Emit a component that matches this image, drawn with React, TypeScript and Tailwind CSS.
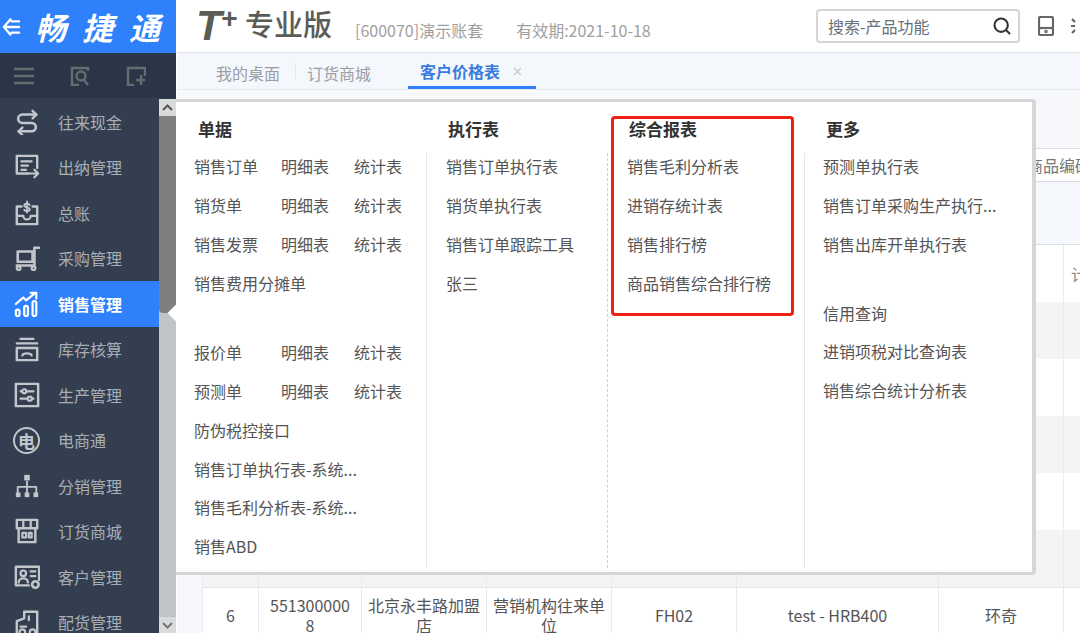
import type { ReactNode } from "react";
import { Search, X } from "lucide-react";

type NavItem = { label: string; icon: ReactNode; active?: boolean };

function Glyph({ children }: { children: ReactNode }) {
  return (
    <svg width="26" height="26" viewBox="0 0 28 28" fill="none" stroke="currentColor" strokeWidth="2.4" strokeLinecap="round" strokeLinejoin="round" className="shrink-0">
      {children}
    </svg>
  );
}

const navItems: NavItem[] = [
  {
    label: "往来现金",
    icon: (
      <Glyph>
        <path d="M24 6H9a4.500 4.500 0 0 0 0 9h10a4.500 4.500 0 0 1 0 9H5" strokeWidth="2.800" />
        <path d="M20 2l4 4-4 4M9 20l-4 4 4 4" strokeWidth="2.600" />
      </Glyph>
    ),
  },
  {
    label: "出纳管理",
    icon: (
      <Glyph>
        <path d="M25 15V2H3v19h12" strokeWidth="2.600" />
        <path d="M8 8h11M8 12.500h7M8 17h5" />
        <path d="M15 21h11M22 17l4 4-4 4" />
      </Glyph>
    ),
  },
  {
    label: "总账",
    icon: (
      <Glyph>
        <path d="M8 7H3v19h22V7h-5" strokeWidth="2.600" />
        <path d="M3 17h7a4 4 0 0 0 8 0h7" />
        <path d="M17 5.500c-1-2-6-2-6 .5s6 1.500 6 4-5 2.500-6 .5M14 1.500v12" strokeWidth="2" />
      </Glyph>
    ),
  },
  {
    label: "采购管理",
    icon: (
      <Glyph>
        <path d="M4 7h16v11H4z" strokeWidth="2.800" />
        <path d="M27 3h-5v19H3" strokeWidth="2.800" />
        <circle cx="5" cy="25" r="2" />
        <circle cx="21" cy="25" r="2" />
      </Glyph>
    ),
  },
  {
    label: "销售管理",
    active: true,
    icon: (
      <Glyph>
        <path d="M2 14L10 7l3 3 10-8" strokeWidth="2.400" />
        <path d="M18 2h6v6" strokeWidth="2.400" />
        <rect x="2" y="20" width="4" height="7" rx="2" />
        <rect x="11" y="16" width="4" height="11" rx="2" />
        <rect x="20" y="11" width="4" height="16" rx="2" />
      </Glyph>
    ),
  },
  {
    label: "库存核算",
    icon: (
      <Glyph>
        <path d="M7 3h14M3 8h22" />
        <path d="M3 13h22v13H3z" strokeWidth="2.600" />
        <path d="M9 21c1-3 9-3 10 0" />
      </Glyph>
    ),
  },
  {
    label: "生产管理",
    icon: (
      <Glyph>
        <path d="M2 2h24v24H2z" strokeWidth="2.600" />
        <path d="M7 10h14M7 18h14" />
        <circle cx="11" cy="10" r="2.200" fill="#333f50" />
        <circle cx="17" cy="18" r="2.200" fill="#333f50" />
      </Glyph>
    ),
  },
  {
    label: "电商通",
    icon: (
      <div className="w-[27px] h-[27px] -ml-[1px] rounded-full border-2 border-[#c3c7cc] flex items-center justify-center text-[17px] leading-none font-bold text-[#c3c7cc] shrink-0">
        电
      </div>
    ),
  },
  {
    label: "分销管理",
    icon: (
      <Glyph>
        <path d="M14 9v6M4 21v-6h20v6M14 15v6" strokeWidth="2" />
        <rect x="11" y="2" width="6" height="6" fill="currentColor" stroke="none" />
        <rect x="2" y="21" width="5" height="5" fill="currentColor" stroke="none" />
        <rect x="11.500" y="21" width="5" height="5" fill="currentColor" stroke="none" />
        <rect x="21" y="21" width="5" height="5" fill="currentColor" stroke="none" />
      </Glyph>
    ),
  },
  {
    label: "订货商城",
    icon: (
      <Glyph>
        <path d="M3 2h22v9H3zM5 11v15h18V11" strokeWidth="2.600" />
        <path d="M10 2v9M18 2v9M9 16h4v5H9zM16 16h3v5h-3z" />
      </Glyph>
    ),
  },
  {
    label: "客户管理",
    icon: (
      <Glyph>
        <path d="M27 17V3H2v20h14" strokeWidth="2.600" />
        <circle cx="10" cy="10" r="3" />
        <path d="M5 20c0-6 10-6 10 0M18 8h5M18 13h5" />
        <circle cx="23" cy="22" r="3.500" strokeWidth="2.800" />
      </Glyph>
    ),
  },
  {
    label: "配货管理",
    icon: (
      <Glyph>
        <path d="M3 27V13l8-3V3h14v24" strokeWidth="2.600" />
        <path d="M7 19h6M16 8v4" />
        <circle cx="9" cy="25" r="3" />
        <circle cx="20" cy="25" r="3" />
      </Glyph>
    ),
  },
];

const tableRows = [0, 1, 2, 3, 4, 5];
const columnCount = [0, 1, 2, 3, 4, 5, 6, 7];

function Sidebar() {
  return (
    <aside className="w-[176px] shrink-0 flex flex-col bg-[#333f50]">
      {/* Logo */}
      <div className="h-[53px] bg-[#2f80fb] flex items-center text-white">
        <svg width="22" height="22" viewBox="0 0 22 22" fill="none" stroke="currentColor" strokeWidth="2.400" strokeLinecap="round" strokeLinejoin="round" className="ml-[1px]">
          <path d="M10 3L3 11l7 8M3 11h16M11 5h8M11 17h8" />
        </svg>
        <span className="ml-[13px] text-[31px] leading-none font-bold italic tracking-[16px] whitespace-nowrap">畅捷通</span>
      </div>

      {/* Quick actions */}
      <div className="h-[45px] bg-[#2a3648] flex items-center text-[#666b70]">
        <svg width="20" height="18" viewBox="0 0 20 18" stroke="currentColor" strokeWidth="2.400" className="ml-[14px]">
          <path d="M0 2h20M0 9h20M0 16h20" />
        </svg>
        <svg width="20" height="20" viewBox="0 0 20 20" fill="none" stroke="currentColor" strokeWidth="2.400" className="ml-[36px]">
          <path d="M18 5V2H2v17h7" />
          <circle cx="11" cy="10" r="4.500" />
          <path d="M14 14l4 5" />
        </svg>
        <svg width="20" height="20" viewBox="0 0 20 20" fill="none" stroke="currentColor" strokeWidth="2.400" className="ml-[36px]">
          <path d="M8 19H2V2h17v8" />
          <path d="M15 9v10M10 14h9" />
        </svg>
      </div>

      <div className="flex-1 flex min-h-0 mt-[1px]">
        {/* Menu list */}
        <nav className="w-[159px] overflow-hidden">
          {navItems.map((item) => (
            <div
              key={item.label}
              className={
                item.active
                  ? "h-[45.5px] flex items-center bg-[#2f80fb] text-white font-bold"
                  : "h-[45.5px] flex items-center text-[#a9aeb4]"
              }
            >
              <div className={item.active ? "ml-[14px] w-[26px] text-white" : "ml-[14px] w-[26px] text-[#c3c7cc]"}>{item.icon}</div>
              <span className="ml-[18px] text-[16px] leading-none whitespace-nowrap">{item.label}</span>
            </div>
          ))}
        </nav>

        {/* Scrollbar */}
        <div className="w-[17px] flex flex-col bg-[#c0c4c9]">
          <div className="h-[17px] bg-[#d9dadc] flex items-center justify-center">
            <svg width="11" height="7" viewBox="0 0 11 7" fill="none" stroke="#555" strokeWidth="2">
              <path d="M1 6l4.500-4.500L10 6" />
            </svg>
          </div>
          <div className="h-[197px] bg-[#7f7f7f] rounded-b-[4px]" />
          <div className="flex-1" />
          <div className="h-[16px] bg-[#d9dadc] flex items-center justify-center">
            <svg width="11" height="7" viewBox="0 0 11 7" fill="none" stroke="#777" strokeWidth="2">
              <path d="M1 1l4.500 4.500L10 1" />
            </svg>
          </div>
        </div>
      </div>
    </aside>
  );
}

function TopBar() {
  return (
    <header className="h-[53px] shrink-0 bg-white border-b border-[#dfe3ea] flex items-center">
      <span className="ml-[19px] text-[42px] leading-none font-black italic text-[#5b5b58] font-['Liberation_Sans',sans-serif]">T</span>
      <span className="-ml-[1px] -mt-[14px] text-[28px] leading-none font-black italic text-[#5b5b58] font-['Liberation_Sans',sans-serif]">+</span>
      <span className="ml-[8px] -mt-[5px] text-[29px] leading-none text-[#5b5b58] font-medium whitespace-nowrap">专业版</span>
      <span className="ml-[23px] mt-[8px] text-[16px] leading-none text-[#a0a0a0] whitespace-nowrap">[600070]演示账套</span>
      <span className="ml-[33px] mt-[8px] text-[16px] leading-none text-[#a0a0a0] whitespace-nowrap">有效期:2021-10-18</span>
      <div className="ml-auto w-[204px] h-[34px] -mt-[1px] border-2 border-[#d6d6d6] rounded-[4px] flex items-center justify-between pl-[10px] pr-[6px]">
        <span className="text-[16px] leading-none text-[#68707c] whitespace-nowrap">搜索-产品功能</span>
        <Search size={20} strokeWidth={2.5} className="text-[#333]" />
      </div>
      <svg width="16" height="20" viewBox="0 0 16 20" fill="none" stroke="#666" strokeWidth="2.200" className="ml-[18px] shrink-0">
        <rect x="1" y="1" width="14" height="18" rx="1.500" />
        <path d="M1 12h14" />
        <circle cx="8" cy="15.500" r="0.700" />
      </svg>
      <svg width="12" height="20" viewBox="0 0 12 20" fill="none" stroke="#666" strokeWidth="2.200" className="ml-[16px] shrink-0 -mr-[2px]">
        <path d="M2 3l3 3M5 14l-3 3M5 10H1" />
      </svg>
    </header>
  );
}

function TabBar() {
  return (
    <div className="h-[37px] shrink-0 bg-[#f4f7fc] border-b border-[#e6e9ee] flex items-stretch text-[16px]">
      <div className="ml-[39px] pt-[3px] flex items-center text-[#9b9fa5] whitespace-nowrap">我的桌面</div>
      <div className="ml-[15px] my-[10px] w-px bg-[#e2e5ea]" />
      <div className="ml-[11px] pt-[3px] flex items-center text-[#9b9fa5] whitespace-nowrap">订货商城</div>
      <div className="ml-[37px] w-[128px] h-[36px] pt-[3px] border-b-[3px] border-[#2f80fb] flex items-center pl-[12px]">
        <span className="font-bold text-[#3a7be0] whitespace-nowrap">客户价格表</span>
        <X size={13} className="ml-[11px] text-[#c3c6cc]" />
      </div>
    </div>
  );
}

function PriceTable() {
  return (
    <div className="flex-1 min-h-0 overflow-hidden bg-[#f6f8fc] pt-[58px] pl-[25px] text-[#555]">
      {/* Filter row */}
      <div className="h-[34px] bg-white border-y border-[#d9dde3] flex items-center justify-end overflow-hidden">
        <span className="-mr-[11px] text-[16px] leading-none text-[#777] whitespace-nowrap">商品编码</span>
      </div>
      <div className="h-[63px] bg-[#f5f8fd] border-b border-[#d9dde3]" />
      {tableRows.map((row) => (
        <div
          key={row}
          className={
            row % 2 === 0
              ? "h-[57px] grid grid-cols-[56px_103px_125px_125px_125px_202px_125px_1fr] bg-white"
              : "h-[57px] grid grid-cols-[56px_103px_125px_125px_125px_202px_125px_1fr] bg-[#f4f4f4]"
          }
        >
          {columnCount.map((col) => (
            <div key={col} className="border-l border-[#ebebeb] flex items-center overflow-hidden">
              {row === 0 && col === 7 ? <span className="pl-[7px] text-[16px] text-[#888] whitespace-nowrap">计量单位</span> : null}
            </div>
          ))}
        </div>
      ))}
      <div className="h-[55px] grid grid-cols-[56px_103px_125px_125px_125px_202px_125px_1fr] bg-white text-[16px] leading-[20px] text-center border-t border-[#e4e4e4]">
        <div className="border-l border-[#ebebeb] flex items-center justify-center">6</div>
        <div className="border-l border-[#ebebeb] flex items-center justify-center break-all px-[8px]">5513000008</div>
        <div className="border-l border-[#ebebeb] flex items-center justify-center px-[4px]">北京永丰路加盟店</div>
        <div className="border-l border-[#ebebeb] flex items-center justify-center px-[4px]">营销机构往来单位</div>
        <div className="border-l border-[#ebebeb] flex items-center justify-center">FH02</div>
        <div className="border-l border-[#ebebeb] flex items-center justify-center">test - HRB400</div>
        <div className="border-l border-[#ebebeb] flex items-center justify-center">环奇</div>
        <div className="border-l border-[#ebebeb]" />
      </div>
    </div>
  );
}

function Row({ children }: { children: ReactNode }) {
  return <div className="h-[38.75px] flex items-center whitespace-nowrap">{children}</div>;
}

function DocRow({ name, detail = true }: { name: string; detail?: boolean }) {
  return (
    <Row>
      <span className="w-[87px]">{name}</span>
      {detail ? <span className="w-[73px]">明细表</span> : null}
      {detail ? <span>统计表</span> : null}
    </Row>
  );
}

function ColumnTitle({ children }: { children: ReactNode }) {
  return <div className="h-[51px] pt-[15px] pl-[22px] text-[17px] leading-[24px] font-bold text-[#333]">{children}</div>;
}

function SalesMenu() {
  return (
    <div className="absolute left-0 top-[99px] w-[860px] h-[476px] bg-white border-y-[3px] border-r-[4px] border-[#d6d6d6] rounded-r-[4px] grid grid-cols-[250px_181px_197px_1fr] text-[16px] text-[#555]">
      <div className="flex flex-col">
        <ColumnTitle>单据</ColumnTitle>
        <div className="pl-[18px] -mt-[6px]">
          <DocRow name="销售订单" />
          <DocRow name="销货单" />
          <DocRow name="销售发票" />
          <DocRow name="销售费用分摊单" detail={false} />
          <div className="h-[31px]" />
          <DocRow name="报价单" />
          <DocRow name="预测单" />
          <DocRow name="防伪税控接口" detail={false} />
          <Row>销售订单执行表-系统...</Row>
          <Row>销售毛利分析表-系统...</Row>
          <Row>销售ABD</Row>
        </div>
      </div>
      <div className="flex flex-col">
        <ColumnTitle>执行表</ColumnTitle>
        <div className="flex-1 mb-[4px] pl-[19px] border-l border-[#e8e8e8]">
          <div className="-mt-[6px]">
            <Row>销售订单执行表</Row>
            <Row>销货单执行表</Row>
            <Row>销售订单跟踪工具</Row>
            <Row>张三</Row>
          </div>
        </div>
      </div>
      <div className="flex flex-col">
        <ColumnTitle>综合报表</ColumnTitle>
        <div className="flex-1 mb-[4px] pl-[19px] border-l border-dashed border-[#d0d0d0]">
          <div className="-mt-[6px]">
            <Row>销售毛利分析表</Row>
            <Row>进销存统计表</Row>
            <Row>销售排行榜</Row>
            <Row>商品销售综合排行榜</Row>
          </div>
        </div>
      </div>
      <div className="flex flex-col">
        <ColumnTitle>更多</ColumnTitle>
        <div className="flex-1 mb-[4px] pl-[18px] border-l border-[#e8e8e8]">
          <div className="-mt-[6px]">
            <Row>预测单执行表</Row>
            <Row>销售订单采购生产执行...</Row>
            <Row>销售出库开单执行表</Row>
            <div className="h-[30px]" />
            <Row>信用查询</Row>
            <Row>进销项税对比查询表</Row>
            <Row>销售综合统计分析表</Row>
          </div>
        </div>
      </div>

      {/* Highlight around the report column */}
      <div className="absolute left-[435px] top-[14px] w-[183px] h-[200px] border-[3px] border-[#f01f12] rounded-[4px]" />
      {/* Pointer to the active menu item */}
      <div className="absolute -left-[6px] top-[205px] w-[12px] h-[12px] bg-white rotate-45" />
    </div>
  );
}

export default function App() {
  return (
    <div className="w-[1080px] h-[633px] overflow-hidden flex bg-white font-['Noto_Sans_CJK_SC','Liberation_Sans',sans-serif]">
      <Sidebar />
      <main className="relative flex-1 min-w-0 flex flex-col pl-px">
        <TopBar />
        <TabBar />
        <PriceTable />
        <SalesMenu />
      </main>
    </div>
  );
}
